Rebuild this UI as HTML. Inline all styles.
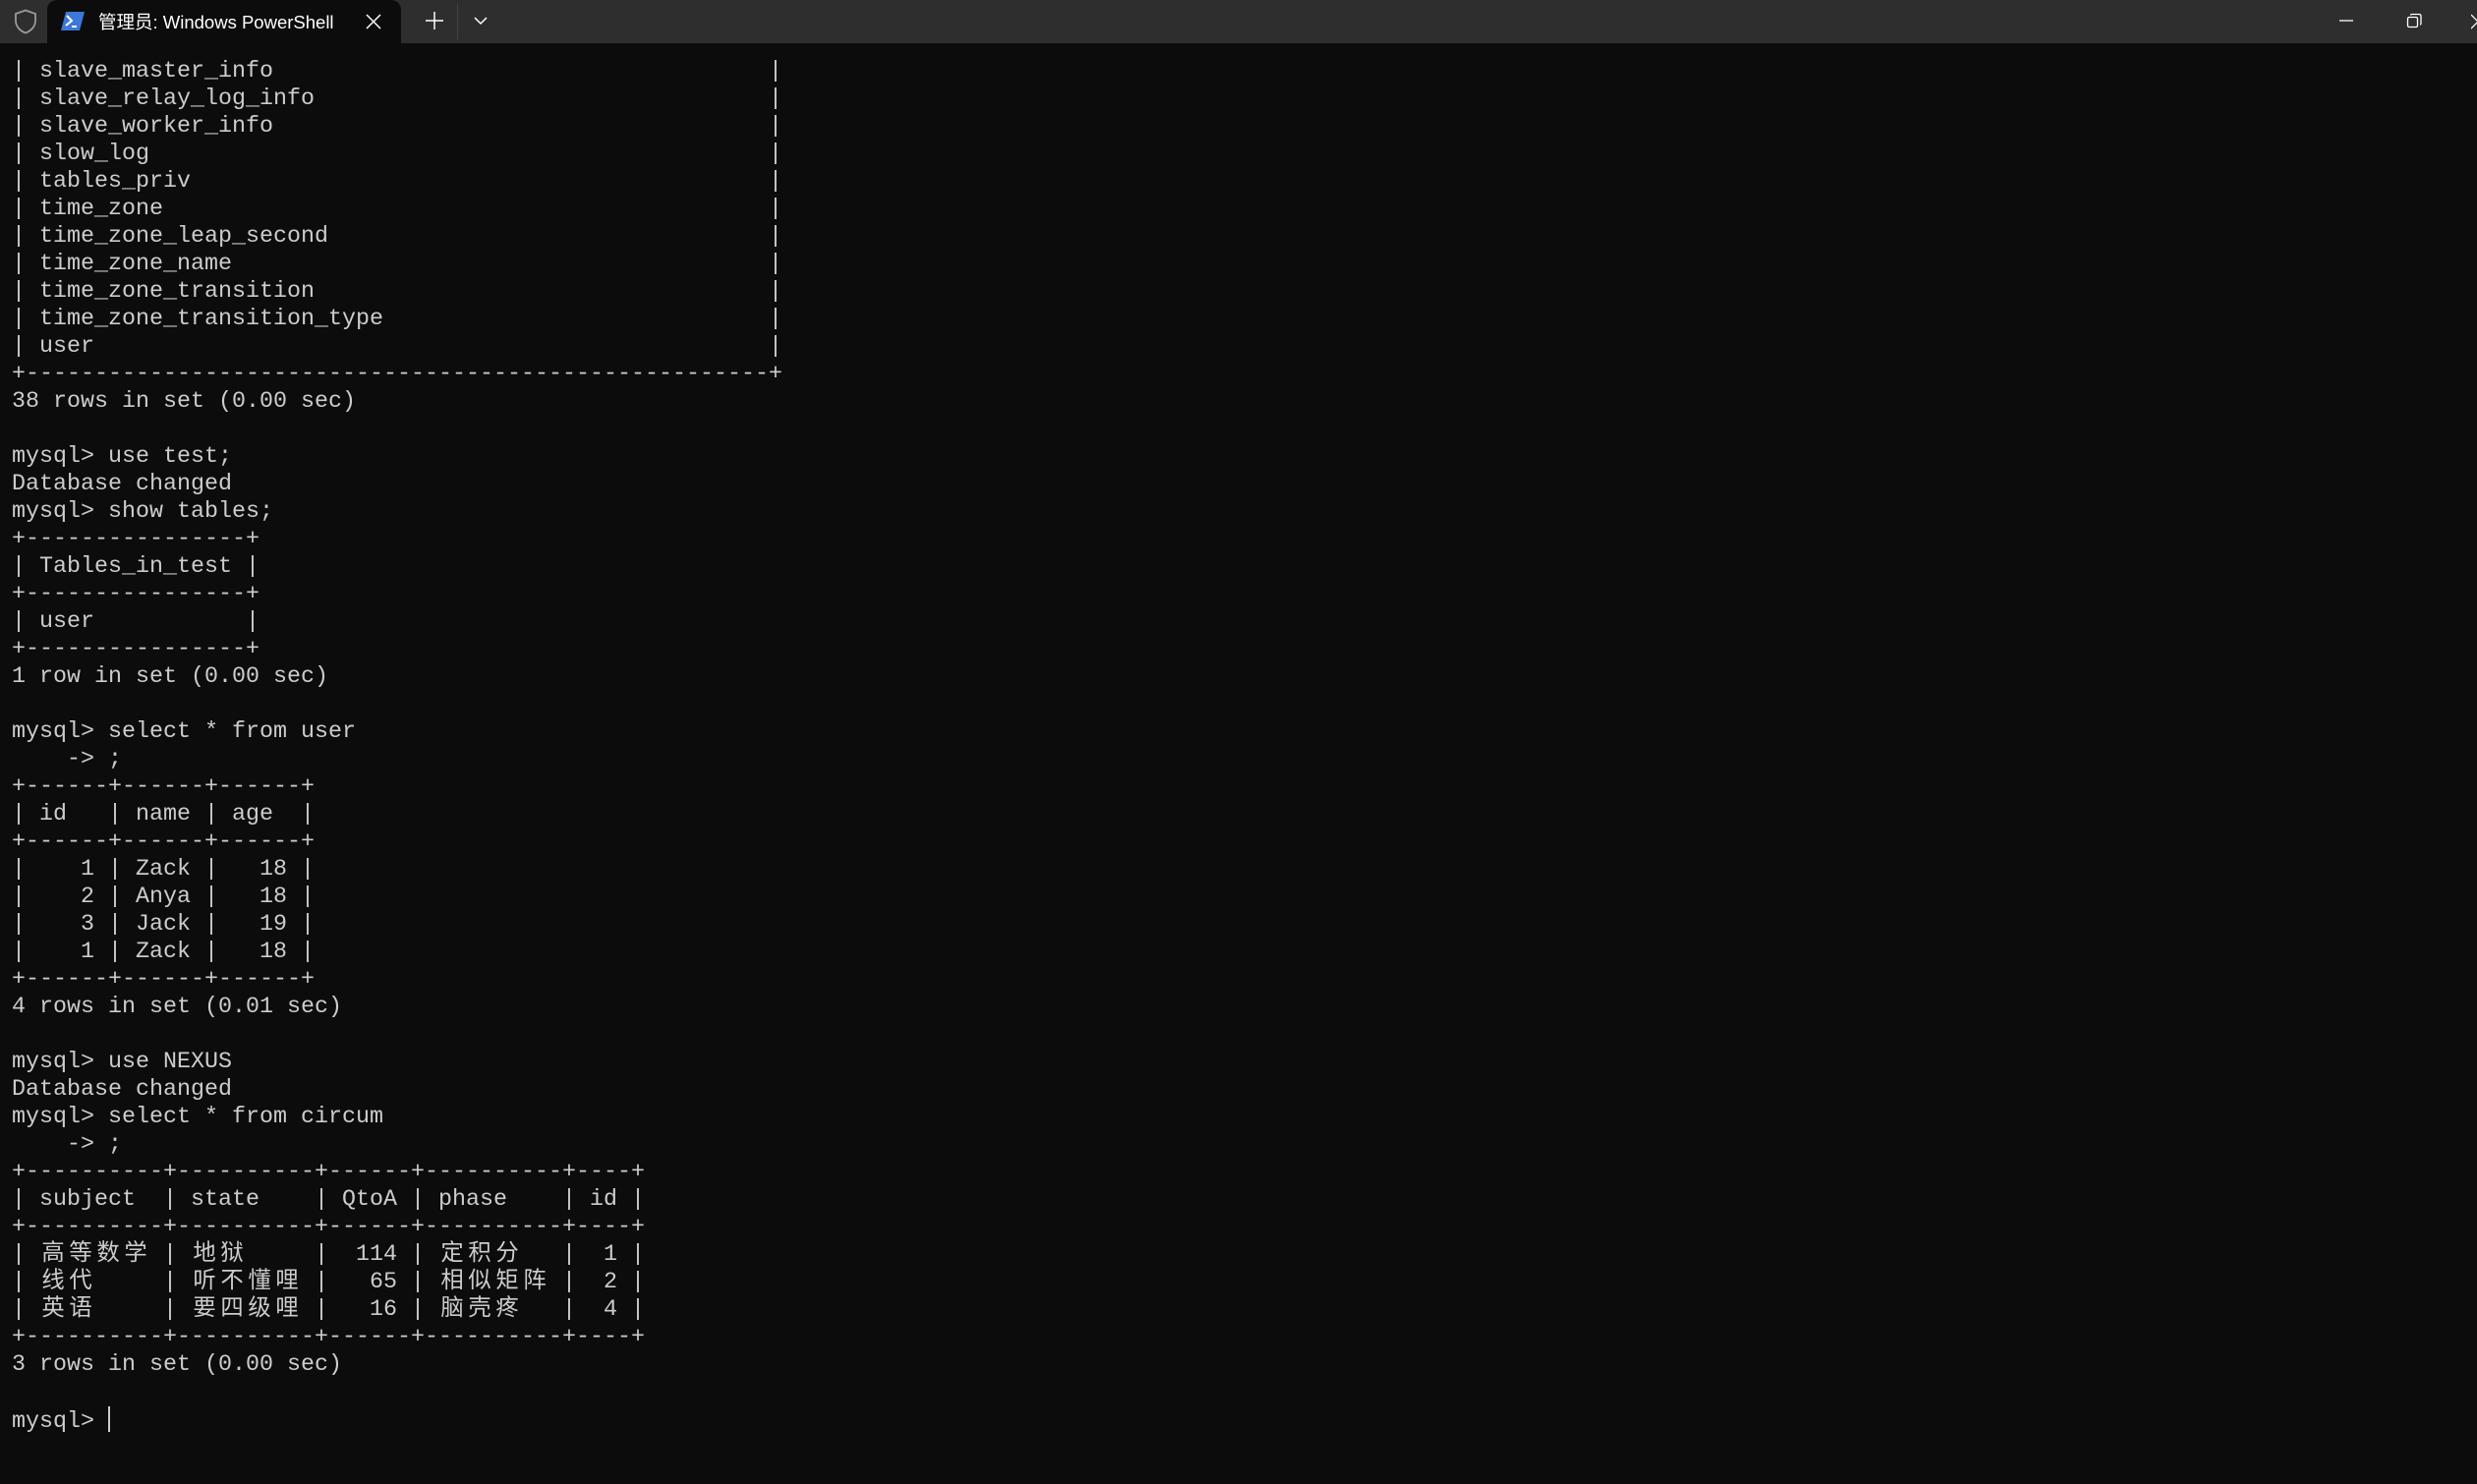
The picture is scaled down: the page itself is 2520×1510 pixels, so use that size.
<!DOCTYPE html>
<html><head><meta charset="utf-8"><style>
html,body{margin:0;padding:0;width:2520px;height:1510px;background:#0c0c0c;overflow:hidden}
#bar{position:absolute;left:0;top:0;width:2520px;height:44px;background:#2e2e2e}
#tab{position:absolute;left:48px;top:0;width:360px;height:44px;background:#0c0c0c;border-radius:10px 10px 0 0}
#title{position:absolute;left:100px;top:9px;color:#fff;font:18.5px "Liberation Sans","Noto Sans CJK SC",sans-serif;white-space:nowrap}
#term{position:absolute;left:12px;top:59px;margin:0;color:#cccccc;font:23.33px/28px "Liberation Mono","Noto Sans CJK SC",monospace;white-space:pre}
.c{display:inline-block;width:28px;text-align:center}
svg{position:absolute}
</style></head><body>
<div id="bar"></div>
<div id="tab"></div>
<svg style="left:14px;top:9px" width="24" height="26" viewBox="0 0 24 26"><path d="M12 1.5 L22 5 V12 C22 18 17.5 22.5 12 24.5 C6.5 22.5 2 18 2 12 V5 Z" fill="none" stroke="#9a9a9a" stroke-width="1.8"/></svg>
<svg style="left:62px;top:12px" width="24" height="19" viewBox="0 0 24 19"><path d="M5 0 H24 L19 19 H0 Z" fill="#3c78d8"/><path d="M6 4 L11 9 L5 14" fill="none" stroke="#fff" stroke-width="2"/><path d="M11 15 H16" stroke="#fff" stroke-width="2"/></svg>
<div id="title">管理员: Windows PowerShell</div>
<svg style="left:370px;top:12px" width="20" height="20" viewBox="0 0 20 20"><path d="M3 3 L17 17 M17 3 L3 17" stroke="#fff" stroke-width="1.5"/></svg>
<svg style="left:432px;top:11px" width="20" height="20" viewBox="0 0 20 20"><path d="M10 1 V19 M1 10 H19" stroke="#fff" stroke-width="1.5"/></svg>
<div style="position:absolute;left:465px;top:4px;width:1px;height:36px;background:#444"></div>
<svg style="left:481px;top:15px" width="16" height="12" viewBox="0 0 16 12"><path d="M2 3 L8 9 L14 3" fill="none" stroke="#fff" stroke-width="1.5"/></svg>
<svg style="left:2379px;top:20px" width="16" height="4" viewBox="0 0 16 4"><path d="M1 1 H15" stroke="#fff" stroke-width="1.3"/></svg>
<svg style="left:2448px;top:13px" width="18" height="18" viewBox="0 0 18 18"><rect x="1.5" y="4.5" width="10" height="10" rx="1.5" fill="none" stroke="#fff" stroke-width="1.3"/><path d="M4.5 2.5 Q4.5 1.5 6 1.5 H13 Q15 1.5 15 3.5 V10.5 Q15 12 14 12" fill="none" stroke="#fff" stroke-width="1.3"/></svg>
<svg style="left:2514px;top:14px" width="6" height="16" viewBox="0 0 6 16"><path d="M0 1 L14 15 M0 15 L14 1" stroke="#fff" stroke-width="1.3"/></svg>
<pre id="term">| slave_master_info                                    |
| slave_relay_log_info                                 |
| slave_worker_info                                    |
| slow_log                                             |
| tables_priv                                          |
| time_zone                                            |
| time_zone_leap_second                                |
| time_zone_name                                       |
| time_zone_transition                                 |
| time_zone_transition_type                            |
| user                                                 |
+------------------------------------------------------+
38 rows in set (0.00 sec)

mysql&gt; use test;
Database changed
mysql&gt; show tables;
+----------------+
| Tables_in_test |
+----------------+
| user           |
+----------------+
1 row in set (0.00 sec)

mysql&gt; select * from user
    -&gt; ;
+------+------+------+
| id   | name | age  |
+------+------+------+
|    1 | Zack |   18 |
|    2 | Anya |   18 |
|    3 | Jack |   19 |
|    1 | Zack |   18 |
+------+------+------+
4 rows in set (0.01 sec)

mysql&gt; use NEXUS
Database changed
mysql&gt; select * from circum
    -&gt; ;
+----------+----------+------+----------+----+
| subject  | state    | QtoA | phase    | id |
+----------+----------+------+----------+----+
| <span class="c">高</span><span class="c">等</span><span class="c">数</span><span class="c">学</span> | <span class="c">地</span><span class="c">狱</span>     |  114 | <span class="c">定</span><span class="c">积</span><span class="c">分</span>   |  1 |
| <span class="c">线</span><span class="c">代</span>     | <span class="c">听</span><span class="c">不</span><span class="c">懂</span><span class="c">哩</span> |   65 | <span class="c">相</span><span class="c">似</span><span class="c">矩</span><span class="c">阵</span> |  2 |
| <span class="c">英</span><span class="c">语</span>     | <span class="c">要</span><span class="c">四</span><span class="c">级</span><span class="c">哩</span> |   16 | <span class="c">脑</span><span class="c">壳</span><span class="c">疼</span>   |  4 |
+----------+----------+------+----------+----+
3 rows in set (0.00 sec)

mysql&gt; <span style="display:inline-block;width:1.5px;height:26px;background:#cccccc;vertical-align:-5px"></span></pre>
</body></html>
